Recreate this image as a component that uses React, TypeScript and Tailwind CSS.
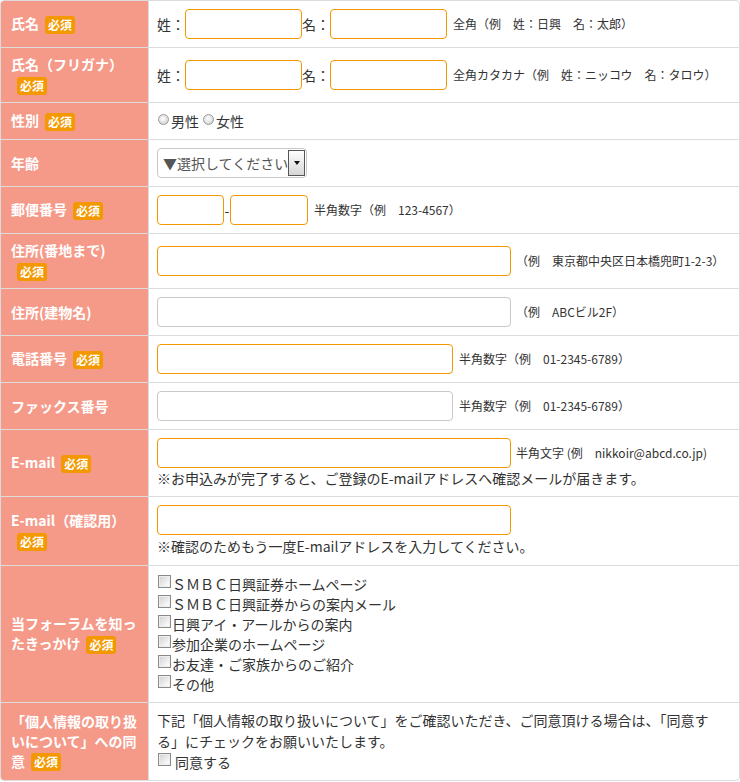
import React from "react";

const Badge = () => (
  <span className="inline-block align-middle ml-[6px] px-[3px] h-[18px] leading-[18px] rounded-[3px] bg-[#f39800] text-white text-[12px] font-bold relative top-[-1px]">
    必須
  </span>
);

const Input = ({ w, gray }: { w: string; gray?: boolean }) => (
  <span
    className={`inline-block h-[30px] rounded-[4px] border bg-white ${w} ${
      gray ? "border-[#c8c8c8]" : "border-[#f39800]"
    }`}
  />
);

const Radio = () => (
  <span className="inline-block w-[11px] h-[11px] rounded-full border border-[#9a9a9a] bg-[radial-gradient(circle_at_45%_40%,#ffffff_0%,#e2e2e2_55%,#bdbdbd_100%)] mr-[2px] relative top-[-2px]" />
);

const Check = () => (
  <span className="inline-block w-[13px] h-[13px] border border-[#8a8a8a] bg-[linear-gradient(135deg,#d0d0d0_0%,#f4f4f4_70%,#ffffff_100%)] shadow-[inset_0_0_0_1px_#eeeeee] mr-[1px] relative top-[-2px]" />
);

const Help = ({ children, cls = "ml-[6px]" }: { children: React.ReactNode; cls?: string }) => (
  <span className={`text-[12px] text-[#333] ${cls}`}>{children}</span>
);

function Row({
  label,
  children,
  h,
  last,
  labelCls = "",
  cellCls = "items-center",
}: {
  label: React.ReactNode;
  children: React.ReactNode;
  h: string;
  last?: boolean;
  labelCls?: string;
  cellCls?: string;
}) {
  return (
    <div className={`grid grid-cols-[148px_1fr] ${h} ${last ? "" : "border-b border-[#dcdcdc]"}`}>
      <div
        className={`bg-[#f59a89] border-r border-[#dcdcdc] px-[10px] flex items-center text-white font-bold text-[14px] leading-[20px] ${labelCls}`}
      >
        <div>{label}</div>
      </div>
      <div className={`px-[8px] flex text-[14px] text-[#333] ${cellCls}`}>{children}</div>
    </div>
  );
}

export default function App() {
  const checks = [
    "ＳＭＢＣ日興証券ホームページ",
    "ＳＭＢＣ日興証券からの案内メール",
    "日興アイ・アールからの案内",
    "参加企業のホームページ",
    "お友達・ご家族からのご紹介",
    "その他",
  ];
  return (
    <div
      className="w-[740px] bg-white"
      style={{ fontFamily: '"Noto Sans CJK JP", "Noto Sans", sans-serif' }}
    >
      <div className="w-[740px] border border-[#dcdcdc] rounded-[4px] overflow-hidden">
        <Row h="h-[47px]" label={<>氏名<Badge /></>}>
          <div className="flex items-center">
            <span>姓：</span>
            <Input w="w-[117px]" />
            <span>名：</span>
            <Input w="w-[117px]" />
            <Help>全角（例　姓：日興　名：太郎）</Help>
          </div>
        </Row>
        <Row h="h-[55px]" label={<>氏名（フリガナ）<br /><Badge /></>}>
          <div className="flex items-center">
            <span>姓：</span>
            <Input w="w-[117px]" />
            <span>名：</span>
            <Input w="w-[117px]" />
            <Help>全角カタカナ（例　姓：ニッコウ　名：タロウ）</Help>
          </div>
        </Row>
        <Row h="h-[37px]" label={<>性別<Badge /></>}>
          <div className="leading-[20px] pl-[1px]">
            <Radio />男性<span className="ml-[4px]" />
            <Radio />女性
          </div>
        </Row>
        <Row h="h-[47px]" label={<>年齢</>}>
          <div className="relative w-[150px] h-[30px] rounded-[4px] border border-[#c8c8c8] bg-white flex items-center">
            <span className="pl-[5px] text-[14px] text-[#555] leading-none">▼選択してください</span>
            <span className="absolute right-[1px] top-[1px] w-[17px] h-[26px] border border-[#555] bg-[linear-gradient(#ffffff,#d6d6d6)] flex items-center justify-center">
              <span className="w-0 h-0 border-l-[3.5px] border-r-[3.5px] border-t-[4px] border-l-transparent border-r-transparent border-t-[#111]" />
            </span>
          </div>
        </Row>
        <Row h="h-[47px]" label={<>郵便番号<Badge /></>}>
          <div className="flex items-center">
            <Input w="w-[67px]" />
            <span className="w-[6px] text-center">-</span>
            <Input w="w-[78px]" />
            <Help>半角数字（例　123-4567）</Help>
          </div>
        </Row>
        <Row h="h-[55px]" label={<>住所(番地まで)<br /><Badge /></>}>
          <div className="flex items-center">
            <Input w="w-[354px]" />
            <Help cls="ml-[5px]">（例　東京都中央区日本橋兜町1-2-3）</Help>
          </div>
        </Row>
        <Row h="h-[47px]" label={<>住所(建物名)</>}>
          <div className="flex items-center">
            <Input w="w-[354px]" gray />
            <Help cls="ml-[5px]">（例　ABCビル2F）</Help>
          </div>
        </Row>
        <Row h="h-[47px]" label={<>電話番号<Badge /></>}>
          <div className="flex items-center">
            <Input w="w-[296px]" />
            <Help>半角数字（例　01-2345-6789）</Help>
          </div>
        </Row>
        <Row h="h-[47px]" label={<>ファックス番号</>}>
          <div className="flex items-center">
            <Input w="w-[296px]" gray />
            <Help>半角数字（例　01-2345-6789）</Help>
          </div>
        </Row>
        <Row h="h-[67px]" label={<>E-mail<Badge /></>}>
          <div className="flex flex-col">
            <div className="flex items-center">
              <Input w="w-[354px]" />
              <Help cls="ml-[5px]">半角文字 (例　nikkoir@abcd.co.jp)</Help>
            </div>
            <div className="leading-[20px]">
              ※お申込みが完了すると、ご登録のE-mailアドレスへ確認メールが届きます。
            </div>
          </div>
        </Row>
        <Row h="h-[69px]" label={<>E-mail（確認用）<br /><Badge /></>}>
          <div className="flex flex-col">
            <Input w="w-[354px]" />
            <div className="leading-[22px]">※確認のためもう一度E-mailアドレスを入力してください。</div>
          </div>
        </Row>
        <Row h="h-[137px]" label={<>当フォーラムを知っ<br />たきっかけ<Badge /></>}>
          <div className="flex flex-col leading-[20px] pl-[1px]">
            {checks.map((c) => (
              <div key={c}>
                <Check />
                {c}
              </div>
            ))}
          </div>
        </Row>
        <Row
          last
          h="h-[77px]"
          label={<>「個人情報の取り扱<br />いについて」への同<br />意<Badge /></>}
          labelCls="leading-[20px]"
          cellCls="pt-[7px] items-start"
        >
          <div className="leading-[21px]">
            下記「個人情報の取り扱いについて」をご確認いただき、ご同意頂ける場合は、「同意す
            <br />
            る」にチェックをお願いいたします。
            <div className="pl-[1px] leading-[20px]">
              <Check />
              <span className="ml-[3px]">同意する</span>
            </div>
          </div>
        </Row>
      </div>
    </div>
  );
}
